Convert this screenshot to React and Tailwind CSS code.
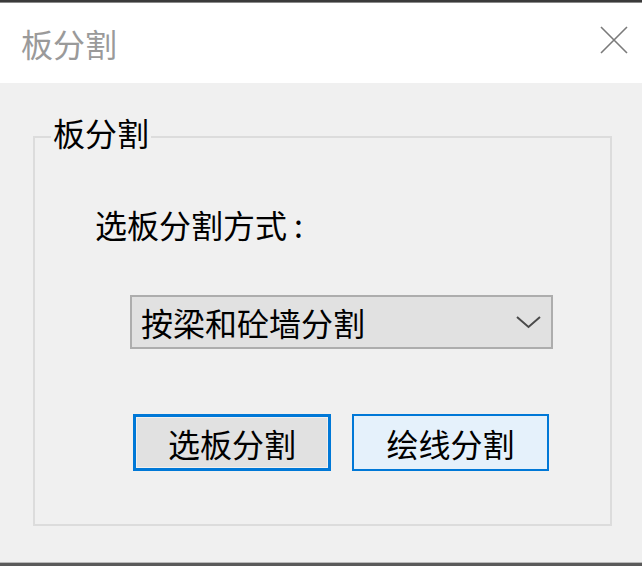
import React, { useState } from 'react';

const font = { fontFamily: '"Noto Sans CJK SC", "Noto Sans", sans-serif' };

function App() {
  const [mode, setMode] = useState('按梁和砼墙分割');

  return (
    <div className="w-[642px] h-[566px] flex flex-col bg-[#f0f0f0] text-black overflow-hidden" style={font}>
      <div className="h-[2px] bg-[#3a3a3a]" />
      <div className="h-[1px] bg-[#8a8a8a]" />

      {/* title bar */}
      <div className="h-[80px] bg-white flex items-center justify-between pl-[21px] pr-[14px]">
        <span className="text-[32px] leading-[32px] text-[#9a9a9a]">板分割</span>
        <svg width="28" height="28" viewBox="0 0 28 28" className="mb-[6px]">
          <path d="M1 1 L27 27 M27 1 L1 27" stroke="#7a7a7a" strokeWidth="1.6" fill="none" />
        </svg>
      </div>

      {/* body */}
      <div className="flex-1 pt-[53px] pl-[33px] pr-[30px]">
        <div className="relative h-[390px] border-2 border-[#dcdcdc] pt-[70px] pl-[60px]">
          <span className="absolute -top-[22px] left-[16px] px-[2px] bg-[#f0f0f0] text-[32px] leading-[32px]">
            板分割
          </span>

          <div className="text-[32px] leading-[32px]">
            选板分割方式<span className="ml-[7px]">:</span>
          </div>

          <div className="mt-[55px] ml-[35px] w-[423px] h-[54px] border-2 border-[#adadad] bg-[#e1e1e1] flex items-center justify-between pl-[9px] pr-[10px]">
            <span className="text-[32px] leading-[32px]">{mode}</span>
            <svg width="25" height="13" viewBox="0 0 25 13">
              <polyline points="1,1 12.5,11 24,1" stroke="#4a4a4a" strokeWidth="2" fill="none" />
            </svg>
          </div>

          <div className="mt-[65px] ml-[38px] flex gap-[21px]">
            <button
              onClick={() => setMode('按梁和砼墙分割')}
              className="w-[198px] h-[57px] border-[3px] border-[#0078d7] bg-[#e1e1e1] flex items-center justify-center text-[32px] leading-[32px] shadow-[inset_0_0_0_1px_#f0f0f0]"
            >
              选板分割
            </button>
            <button
              onClick={() => setMode('绘线分割')}
              className="w-[197px] h-[57px] border-2 border-[#0078d7] bg-[#e5f1fb] flex items-center justify-center text-[32px] leading-[32px]"
            >
              绘线分割
            </button>
          </div>
        </div>
      </div>

      <div className="h-[1px] bg-[#b8b8b8]" />
      <div className="h-[3px] bg-[#5a5a5a]" />
    </div>
  );
}

export default App;
